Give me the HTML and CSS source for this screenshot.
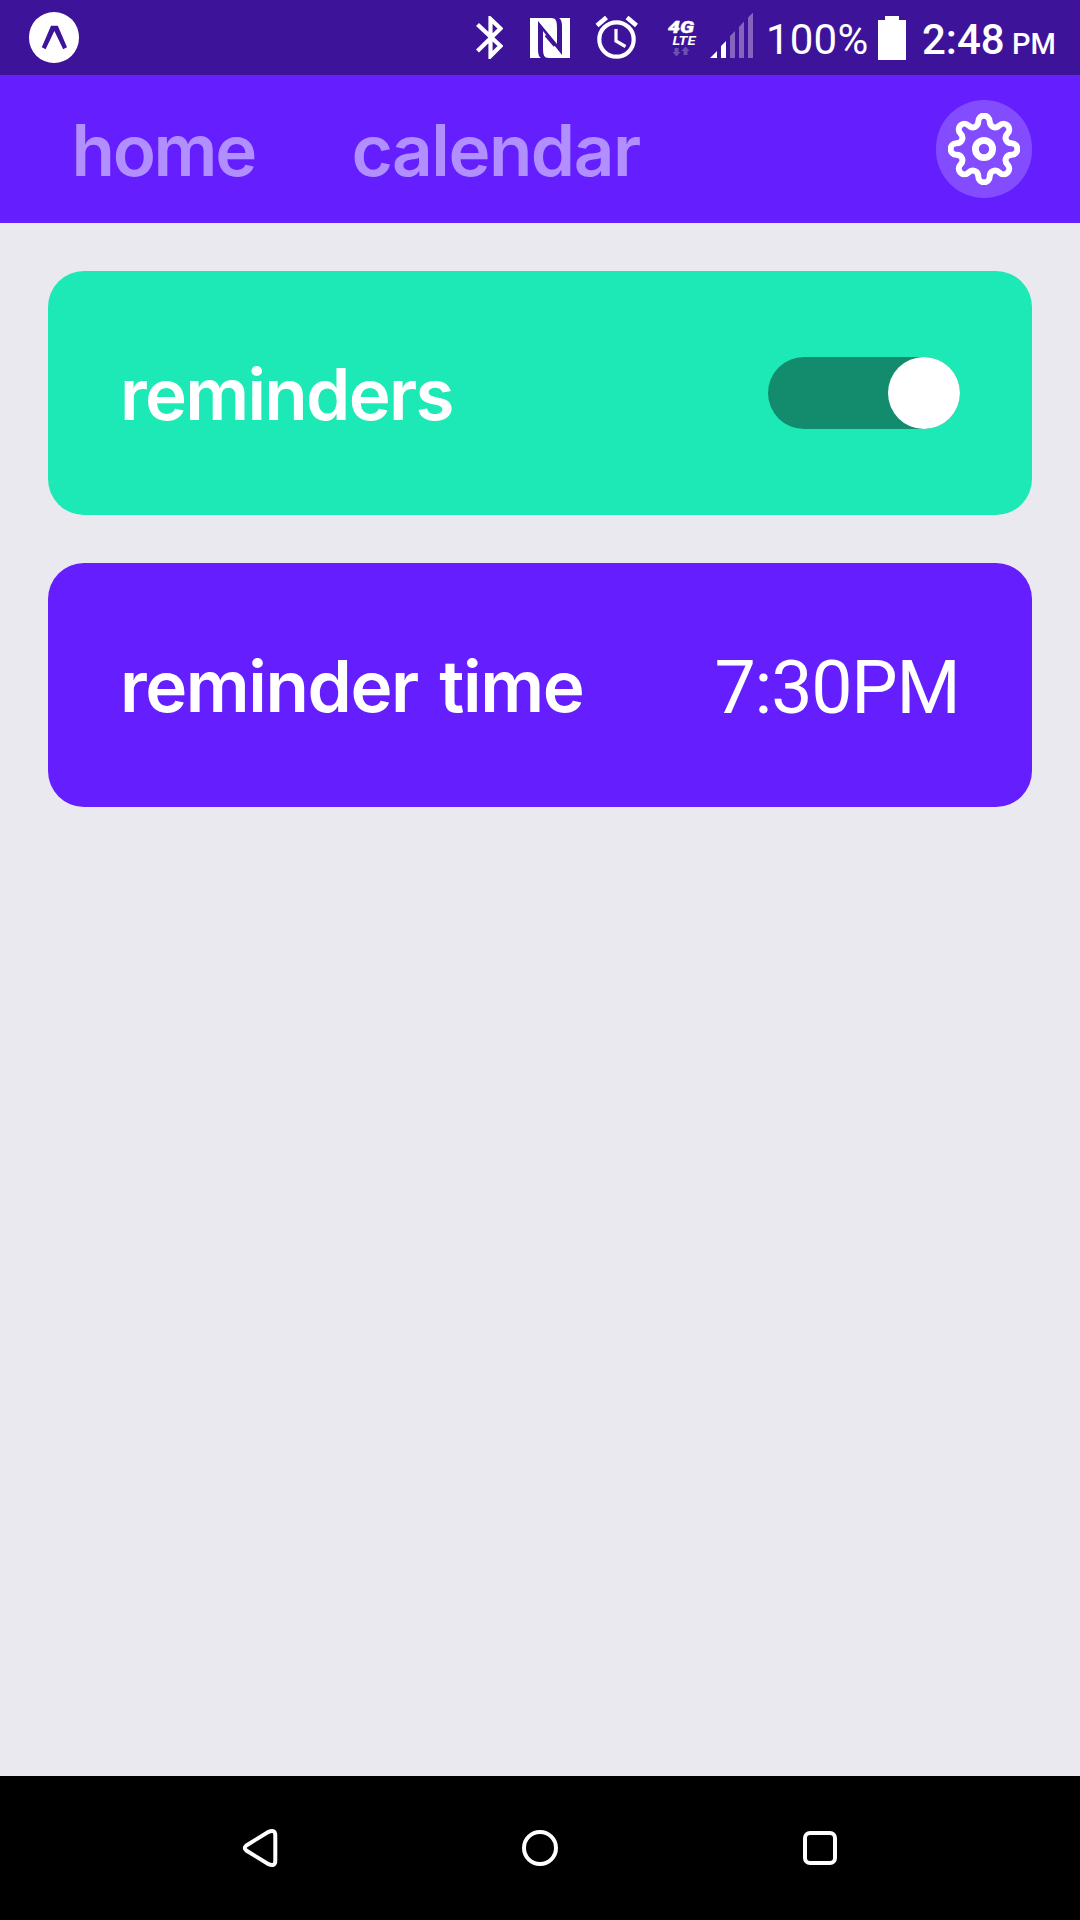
FILE: index.html
```html
<!DOCTYPE html>
<html lang="en">
<head>
<meta charset="utf-8">
<title>Settings</title>
<link rel="stylesheet" href="styles.css">
</head>
<body>
<div class="screen">
  <div class="status">
    <svg class="expo" width="50" height="51" viewBox="29 12 50 51"><rect x="29" y="12" width="50" height="51" rx="25" fill="#fff"/><path d="M51 25.7H57.8L67 47.3L63.2 49.2L54.4 31L45.6 49.2L41.8 47.3Z" fill="#3d1399"/></svg>
    <svg class="bluetooth" width="27" height="43" viewBox="475.5 16 27 43"><path d="M477 24.5L500 46L490 56V19L500 28.5L477 51" fill="none" stroke="#fff" stroke-width="4.2"/></svg>
    <svg class="nfc" width="40" height="40" viewBox="530 17 40 40"><path d="M530 17H551C556 17 557 20 557 27V43L538 20V49C538 53 539 56 541 57H530Z" fill="#fff"/><path d="M570 57H549C544 57 543 54 543 47V30L562 54V25C562 21 561 18 559 17H570Z" fill="#fff"/><path d="M545.5 34.500L554.500 45" stroke="#3d1399" stroke-width="2"/></svg>
    <svg class="alarm" width="43" height="44" viewBox="595 16 43 44"><g fill="none" stroke="#fff"><circle cx="616.500" cy="39.500" r="17.200" stroke-width="4.200"/><path d="M616 29V41L625.500 46.500" stroke-width="3.200"/><path d="M597 25.500L606.500 17.500M627 17.500L636.500 25.500" stroke-width="4.600"/></g></svg>
    <svg class="lte" width="34" height="41" viewBox="665 16 34 41"><text class="lte-g" x="668" y="32" textLength="26" lengthAdjust="spacingAndGlyphs">4G</text><text class="lte-t" x="672.500" y="44" textLength="23" lengthAdjust="spacingAndGlyphs">LTE</text><path d="M674.500 47H678.500V51H680.500L676.500 55.500L672.500 51H674.500ZM683.500 54V50H681.500L685.500 45.500L689.500 50H687.500V54Z" fill="#6e4fb2"/></svg>
    <svg class="signal" width="43" height="46" viewBox="710 13 43 46"><path d="M710 58L717 51V58ZM721 46L726 41V58H721Z" fill="#fff"/><path d="M730 36L735 31V58H730ZM739 27L744 21.500V58H739ZM748 17.500L753 12.500V58H748Z" fill="#8564c0"/></svg>
    <span class="percent">100%</span>
    <svg class="battery" width="28" height="44" viewBox="878 15 28 44"><path d="M885 15H899V19H906V59H878V19H885Z" fill="#fff"/></svg>
    <span class="clock">2:48</span>
    <span class="meridiem">PM</span>
  </div>
  <nav class="tabs">
    <a class="tab tab-home">home</a>
    <a class="tab tab-calendar">calendar</a>
    <a class="settings"><svg width="72" height="72" viewBox="-36 -36 72 72" fill="none" stroke="#fff"><path stroke-width="6" d="M-5.67 -27.67A5.67 5.67 0 0 1 5.67 -27.67C5.67 -22 11.55 -19.57 15.56 -23.58A5.67 5.67 0 0 1 23.58 -15.56C19.57 -11.55 22 -5.67 27.67 -5.67A5.67 5.67 0 0 1 27.67 5.67C22 5.67 19.57 11.55 23.58 15.56A5.67 5.67 0 0 1 15.56 23.58C11.55 19.57 5.67 22 5.67 27.67A5.67 5.67 0 0 1 -5.67 27.67C-5.67 22 -11.55 19.57 -15.56 23.58A5.67 5.67 0 0 1 -23.58 15.56C-19.57 11.55 -22 5.67 -27.67 5.67A5.67 5.67 0 0 1 -27.67 -5.67C-22 -5.67 -19.57 -11.55 -23.58 -15.56A5.67 5.67 0 0 1 -15.56 -23.58C-11.55 -19.57 -5.67 -22 -5.67 -27.67Z"/><circle r="8.600" stroke-width="6.800"/></svg></a>
  </nav>
  <main class="content">
    <section class="card card-on">
      <span class="label label-reminders">reminders</span>
      <span class="toggle"><span class="knob"></span></span>
    </section>
    <section class="card card-time">
      <span class="label label-time">reminder time</span>
      <span class="value">7:30PM</span>
    </section>
  </main>
  <footer class="navbar">
    <svg width="40" height="44" viewBox="240 1826 40 44"><path d="M246.300 1845.500L268.500 1831.800Q275.300 1829 275.300 1835.500V1860.500Q275.300 1867 268.500 1864.200L246.300 1850.500Q243.300 1848 246.300 1845.500Z" fill="none" stroke="#fff" stroke-width="4"/></svg>
    <svg width="40" height="44" viewBox="520 1826 40 44"><circle cx="540" cy="1848" r="16" fill="none" stroke="#fff" stroke-width="4"/></svg>
    <svg width="40" height="44" viewBox="800 1826 40 44"><rect x="805" y="1833" width="30" height="30" rx="5" fill="none" stroke="#fff" stroke-width="4"/></svg>
  </footer>
</div>
</body>
</html>
```
FILE: styles.css
```css
body { margin: 0; }
svg { display: block; flex: none; }
.screen { width: 1080px; height: 1920px; display: flex; flex-direction: column; background: #eae9ef; overflow: hidden; }

.status { height: 75px; background: #3d1399; display: flex; align-items: center; color: #fff; font-family: Roboto, sans-serif; padding-left: 29px; }
.bluetooth { margin-left: 396.5px; }
.nfc { margin-left: 27.5px; }
.alarm { margin-left: 25px; }
.lte { margin-left: 27px; }
.lte-g { font: italic 900 17px Roboto, sans-serif; fill: #fff; stroke: #fff; stroke-width: 0.4px; }
.lte-t { font: italic 700 13px Roboto, sans-serif; fill: #fff; }
.signal { margin-left: 11px; margin-bottom: 3px; }
.percent { width: 111px; margin-left: 13px; font-size: 42px; line-height: 50px; padding-top: 5px; box-sizing: border-box; letter-spacing: 0.2px; }
.battery { margin-left: 1px; }
.clock { width: 90px; margin-left: 16px; font-size: 42px; font-weight: 500; line-height: 50px; padding-top: 5px; box-sizing: border-box; }
.meridiem { font-size: 29px; font-weight: 500; line-height: 34px; padding-top: 13px; }

.tabs { height: 148px; background: #651fff; display: flex; align-items: center; padding: 0 48px 0 71.5px; box-sizing: border-box; }
.tab, .label { font-family: Inter, sans-serif; font-size: 71px; font-weight: 570; line-height: 84px; white-space: nowrap; padding-top: 2px; }
.tab { color: #b28fff; }
.tab-home { width: 184px; letter-spacing: -2.3px; }
.tab-calendar { margin-left: 96px; letter-spacing: -1.5px; }
.settings { margin-left: auto; width: 96px; height: 98px; border-radius: 48px; background: #844cff; display: flex; align-items: center; justify-content: center; }

.content { flex: 1; display: flex; flex-direction: column; gap: 48px; padding: 48px; }
.card { height: 244px; border-radius: 36px; padding: 0 72px; box-sizing: border-box; display: flex; align-items: center; justify-content: space-between; color: #fff; }
.card-on { background: #1de9b6; }
.card-time { background: #651fff; }
.label-reminders { letter-spacing: -1.7px; }
.label-time { letter-spacing: -1.4px; word-spacing: 5px; }
.toggle { width: 192px; height: 72px; border-radius: 36px; background: #128c6d; display: flex; justify-content: flex-end; }
.knob { width: 72px; height: 72px; border-radius: 50%; background: #fff; }
.value { font-family: Roboto, sans-serif; font-size: 73.5px; line-height: 86px; letter-spacing: -1.2px; margin-right: 0.5px; padding-top: 5px; }

.navbar { height: 144px; background: #000; display: flex; align-items: center; justify-content: space-between; padding: 0 240px; }
```
